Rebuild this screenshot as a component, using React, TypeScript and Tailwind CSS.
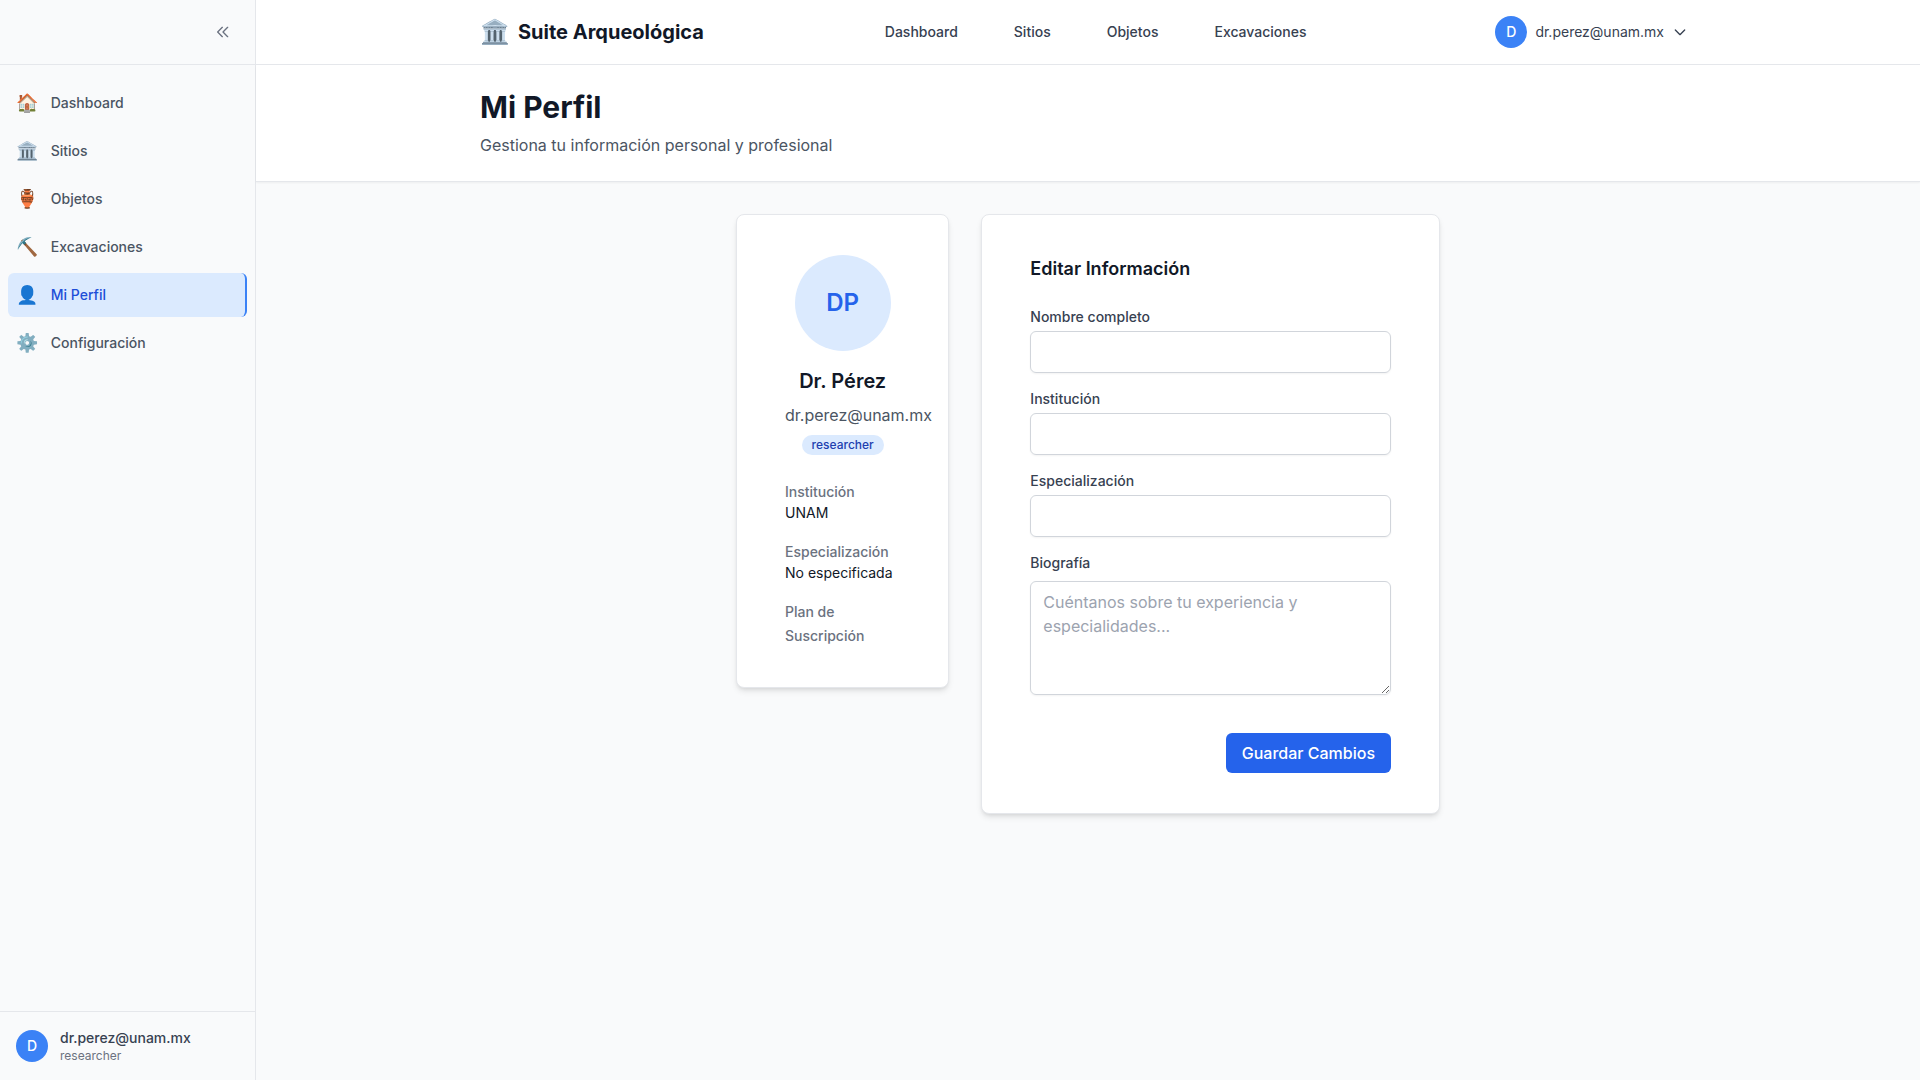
const navItems = [
  { icon: '🏠', label: 'Dashboard' },
  { icon: '🏛️', label: 'Sitios' },
  { icon: '🏺', label: 'Objetos' },
  { icon: '⛏️', label: 'Excavaciones' },
  { icon: '👤', label: 'Mi Perfil', active: true },
  { icon: '⚙️', label: 'Configuración' },
];

const topLinks = ['Dashboard', 'Sitios', 'Objetos', 'Excavaciones'];
const fields = ['Nombre completo', 'Institución', 'Especialización'];

function StrokeIcon({ d }: { d: string }) {
  return (
    <svg className="h-4 w-4" fill="none" stroke="currentColor" viewBox="0 0 24 24">
      <path strokeLinecap="round" strokeLinejoin="round" strokeWidth={2} d={d} />
    </svg>
  );
}

function Avatar() {
  return (
    <div className="flex h-8 w-8 shrink-0 items-center justify-center rounded-full bg-[#3b82f6]">
      <span className="text-sm font-medium text-white">D</span>
    </div>
  );
}

function Sidebar() {
  return (
    <aside className="flex w-64 shrink-0 flex-col border-r border-[#e5e7eb] bg-[#f9fafb]">
      <div className="flex h-[65px] items-center justify-end border-b border-[#e5e7eb] px-4">
        <button className="rounded-md p-2 text-[#6b7280]">
          <StrokeIcon d="M11 19l-7-7 7-7m8 14l-7-7 7-7" />
        </button>
      </div>
      <nav className="flex flex-1 flex-col gap-1 px-2 py-4">
        {navItems.map((item) => (
          <a
            key={item.label}
            className={
              item.active
                ? 'flex items-center rounded-md border-r-2 border-[#3b82f6] bg-[#dbeafe] p-2 text-sm font-medium text-[#1d4ed8]'
                : 'flex items-center rounded-md p-2 text-sm font-medium text-[#4b5563]'
            }
          >
            <span className="mr-[12.75px] text-lg leading-7">{item.icon}</span>
            <span>{item.label}</span>
          </a>
        ))}
      </nav>
      <div className="flex items-center border-t border-[#e5e7eb] p-4">
        <Avatar />
        <div className="ml-3">
          <p className="text-sm font-medium text-[#374151]">dr.perez@unam.mx</p>
          <p className="text-xs text-[#6b7280]">researcher</p>
        </div>
      </div>
    </aside>
  );
}

function TopBar() {
  return (
    <header className="border-b border-[#e5e7eb] bg-white">
      <div className="mx-auto flex h-16 max-w-7xl items-center justify-between px-8">
        <div className="flex items-center gap-2">
          <span className="text-2xl">🏛️</span>
          <span className="text-xl font-bold text-[#111827]">Suite Arqueológica</span>
        </div>
        <nav className="flex gap-8">
          {topLinks.map((link) => (
            <a key={link} className="px-3 py-2 text-sm font-medium text-[#374151]">
              {link}
            </a>
          ))}
        </nav>
        <button className="flex items-center gap-2 rounded-md p-2 text-sm text-[#374151]">
          <Avatar />
          <span>dr.perez@unam.mx</span>
          <StrokeIcon d="M19 9l-7 7-7-7" />
        </button>
      </div>
    </header>
  );
}

function ProfileCard() {
  return (
    <section className="rounded-lg border border-[#e5e7eb] bg-white px-12 py-10 shadow-md">
      <div className="flex flex-col items-center">
        <div className="flex h-24 w-24 items-center justify-center rounded-full bg-[#dbeafe]">
          <span className="text-2xl font-semibold text-[#2563eb]">DP</span>
        </div>
        <h2 className="mt-4 text-xl font-semibold text-[#111827]">Dr. Pérez</h2>
        <p className="mt-2 w-full text-center text-[#4b5563]">dr.perez@unam.mx</p>
        <span className="mt-2 rounded-full bg-[#dbeafe] px-2.5 py-0.5 text-xs font-medium text-[#1e40af]">
          researcher
        </span>
      </div>
      <div className="mt-6 flex flex-col gap-4">
        <div>
          <label className="text-sm font-medium text-[#6b7280]">Institución</label>
          <p className="text-sm text-[#111827]">UNAM</p>
        </div>
        <div>
          <label className="text-sm font-medium text-[#6b7280]">Especialización</label>
          <p className="text-sm whitespace-nowrap text-[#111827]">No especificada</p>
        </div>
        <div>
          <label className="text-sm font-medium text-[#6b7280]">Plan de Suscripción</label>
        </div>
      </div>
    </section>
  );
}

function EditCard() {
  return (
    <section className="col-span-2 rounded-lg border border-[#e5e7eb] bg-white px-12 py-10 shadow-md">
      <h3 className="mb-6 text-lg leading-7 font-semibold text-[#111827]">Editar Información</h3>
      <form className="flex flex-col gap-4">
        {fields.map((label) => (
          <div key={label}>
            <label className="block text-sm font-medium text-[#374151]">{label}</label>
            <input className="mt-1 block w-full rounded-md border border-[#d1d5db] px-3 py-2 shadow-[0_1px_2px_0_rgba(0,0,0,0.05)]" />
          </div>
        ))}
        <div>
          <label className="mb-2 block text-sm font-medium text-[#374151]">Biografía</label>
          <textarea
            rows={4}
            placeholder="Cuéntanos sobre tu experiencia y especialidades..."
            className="block w-full rounded-md border border-[#d1d5db] px-3 py-2 shadow-[0_1px_2px_0_rgba(0,0,0,0.05)] placeholder:text-[#9ca3af]"
          />
        </div>
        <div className="mt-[22px] flex justify-end">
          <button type="button" className="rounded-md bg-[#2563eb] px-4 py-2 font-medium text-white">
            Guardar Cambios
          </button>
        </div>
      </form>
    </section>
  );
}

export default function App() {
  return (
    <div className="flex h-screen overflow-hidden bg-[#f9fafb] font-['Inter',sans-serif] text-base">
      <Sidebar />
      <div className="flex flex-1 flex-col">
        <TopBar />
        <div className="border-b border-[#e5e7eb] bg-white shadow-[0_1px_2px_0_rgba(0,0,0,0.05)]">
          <div className="mx-auto max-w-7xl px-8 py-6">
            <h1 className="text-3xl font-bold text-[#111827]">Mi Perfil</h1>
            <p className="mt-2 text-[#4b5563]">Gestiona tu información personal y profesional</p>
          </div>
        </div>
        <main className="mx-auto grid w-full max-w-3xl grid-cols-3 items-start gap-8 p-8">
          <ProfileCard />
          <EditCard />
        </main>
      </div>
    </div>
  );
}
